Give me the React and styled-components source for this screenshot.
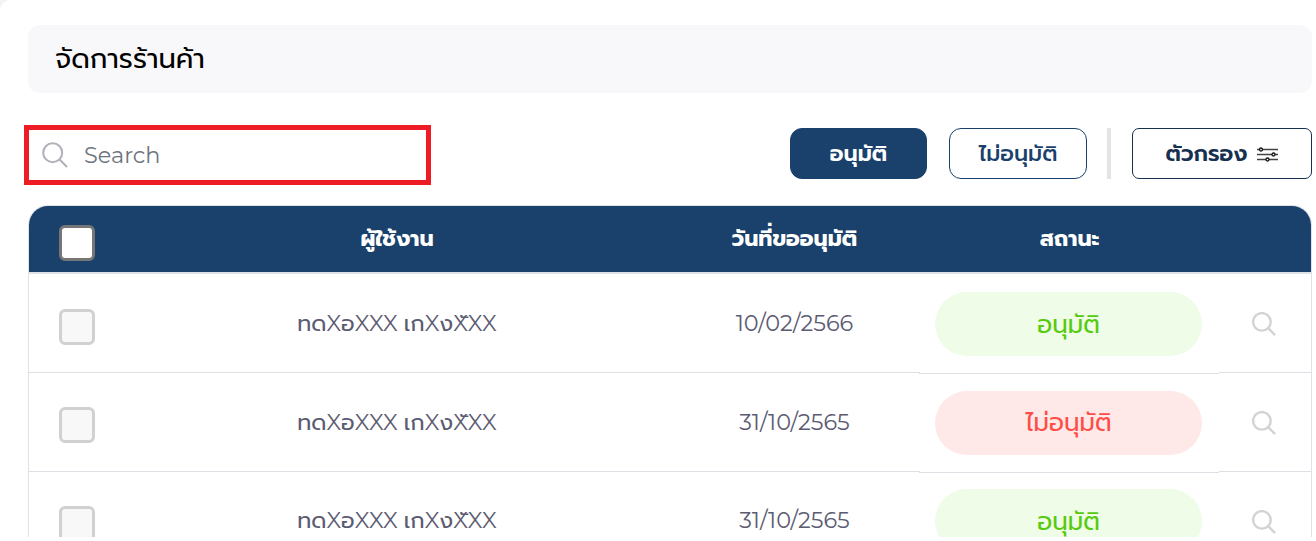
import React from 'react';
import styled, { createGlobalStyle } from 'styled-components';

const Global = createGlobalStyle`
  * { box-sizing: border-box; }
  body { margin: 0; background: #fff; overflow: hidden; font-family: Montserrat, Prompt, "Noto Sans", sans-serif; }
`;
const Page = styled.div`
  height: 537px; overflow: hidden; padding: 25px 4px 0 28px;
  background: radial-gradient(circle at 12px 12px, #fff 12px, #f4f4f6 12.6px) 0 0 / 12px 12px no-repeat, #fff;
`;
const TitleBar = styled.header`
  height: 68px; border-radius: 12px; background: #f8f8fb; display: flex; align-items: center; padding-left: 27px;
`;
const Text = styled.span`
  font-size: ${p => p.$size}px; font-weight: ${p => p.$weight || 400};
  line-height: 1; white-space: nowrap; color: ${p => p.$color || 'inherit'};
`;
const Toolbar = styled.div`
  display: flex; align-items: center; height: 60px; margin: 32px 0 20px -4px;
`;
const SearchBox = styled.div`
  width: 407px; height: 60px; border: 5px solid #ee1c25; display: flex; align-items: center; padding-left: 13px; gap: 16px;
  color: #6c757d; margin-right: auto;
`;
const Button = styled.button`
  height: 51px; width: ${p => p.$w}px; padding: 1px 0 0; display: flex; align-items: center; justify-content: center; gap: 10px;
  border: 1px solid ${p => p.$line}; border-radius: ${p => p.$r}px; background: ${p => p.$bg || '#fff'};
  color: ${p => p.$fg}; font-family: inherit; margin: 0 0 3px ${p => p.$ml || 0}px;
`;
const Divider = styled.div`
  width: 4px; height: 51px; margin: 0 21px 3px 20px; background: #e4e4e4;
`;
const Table = styled.section`
  border: 1px solid #dee2e6; border-radius: 20px 20px 0 0; overflow: hidden; width: 1284px;
`;
const Row = styled.div`
  display: grid; grid-template-columns: 96px 544px 251px 299px 92px; height: 98.75px; color: #5b5b72;
`;
const HeadRow = styled(Row)`
  height: 68px; background: #19416c; color: #fff;
`;
const Cell = styled.div`
  display: flex; align-items: center; justify-content: center; border-bottom: 1px solid #dedee4; padding-top: 0.4px;
`;
const HeadCell = styled(Cell)`
  border-bottom: 2px solid #dee2e6; padding-top: 1px;
`;
const Check = styled.span`
  width: 36px; height: 36px; border: 3px solid ${p => p.$head ? '#767676' : '#d1d1d1'}; border-radius: 6px;
  background: ${p => p.$head ? '#fff' : '#f8f8f8'}; margin-top: 7px;
`;
const StatusCell = styled(Cell)`
  height: calc(100% + 1px); margin-left: -1px; padding-right: 1px; padding-top: 1px;
`;
const Pill = styled.span`
  width: 267px; height: 64px; border-radius: 32px; display: flex; align-items: center; justify-content: center;
  background: ${p => p.$ok ? '#effce8' : '#ffe9e8'}; color: ${p => p.$ok ? '#56ca0c' : '#ff4c46'};
`;
const Action = styled(Cell)`
  padding-right: 2px; padding-top: 3px;
`;

const Magnifier = ({ color, size, w }) => (
  <svg width={size} height={size} viewBox="0 0 26 26" fill="none" stroke={color} strokeWidth={w}>
    <circle cx="10.7" cy="10.7" r="9.5" /><path d="M17.3 17.3L25 25" />
  </svg>
);
const Sliders = () => (
  <svg width="21" height="16" viewBox="0 0 21 16" fill="#fff" stroke="#444">
    <path d="M0 3.5H21M0 8.5H21M0 13.5H21" strokeWidth="1.3" />
    <g stroke="#111" strokeWidth="1.3"><circle cx="4" cy="3.5" r="1.5" /><circle cx="16.5" cy="8.5" r="1.5" /><circle cx="10.5" cy="13.5" r="1.5" /></g>
  </svg>
);

const rows = [
  { date: '10/02/2566', ok: true },
  { date: '31/10/2565', ok: false },
  { date: '31/10/2565', ok: true },
];

export default function App() {
  return (
    <Page>
      <Global />
      <TitleBar><Text $size={27.5} $color="#000">จัดการร้านค้า</Text></TitleBar>
      <Toolbar>
        <SearchBox><Magnifier color="#b0b0ba" size={26} w={2} /><Text $size={22.4} $weight={450}>Search</Text></SearchBox>
        <Button $w={137} $r={12} $bg="#19416c" $line="#19416c" $fg="#fff"><Text $size={22.2} $weight={600}>อนุมัติ</Text></Button>
        <Button $w={138} $r={12} $line="#19416c" $fg="#19416c" $ml={22}><Text $size={22.2} $weight={500}>ไม่อนุมัติ</Text></Button>
        <Divider />
        <Button $w={180} $r={7} $line="#16304f" $fg="#16304f"><Text $size={22.2} $weight={600}>ตัวกรอง</Text><Sliders /></Button>
      </Toolbar>
      <Table>
        <HeadRow>
          <HeadCell><Check $head /></HeadCell>
          <HeadCell><Text $size={22.1} $weight={700}>ผู้ใช้งาน</Text></HeadCell>
          <HeadCell><Text $size={22.1} $weight={700}>วันที่ขออนุมัติ</Text></HeadCell>
          <HeadCell><Text $size={22.1} $weight={700}>สถานะ</Text></HeadCell>
          <HeadCell />
        </HeadRow>
        {rows.map((r, i) => (
          <Row key={i}>
            <Cell><Check /></Cell>
            <Cell><Text $size={22.4}>ทดXอXXX เกXงXัXX</Text></Cell>
            <Cell><Text $size={22.4}>{r.date}</Text></Cell>
            <StatusCell><Pill $ok={r.ok}><Text $size={24.6}>{r.ok ? 'อนุมัติ' : 'ไม่อนุมัติ'}</Text></Pill></StatusCell>
            <Action><Magnifier color="#d3d3d3" size={24} w={2.6} /></Action>
          </Row>
        ))}
      </Table>
    </Page>
  );
}
